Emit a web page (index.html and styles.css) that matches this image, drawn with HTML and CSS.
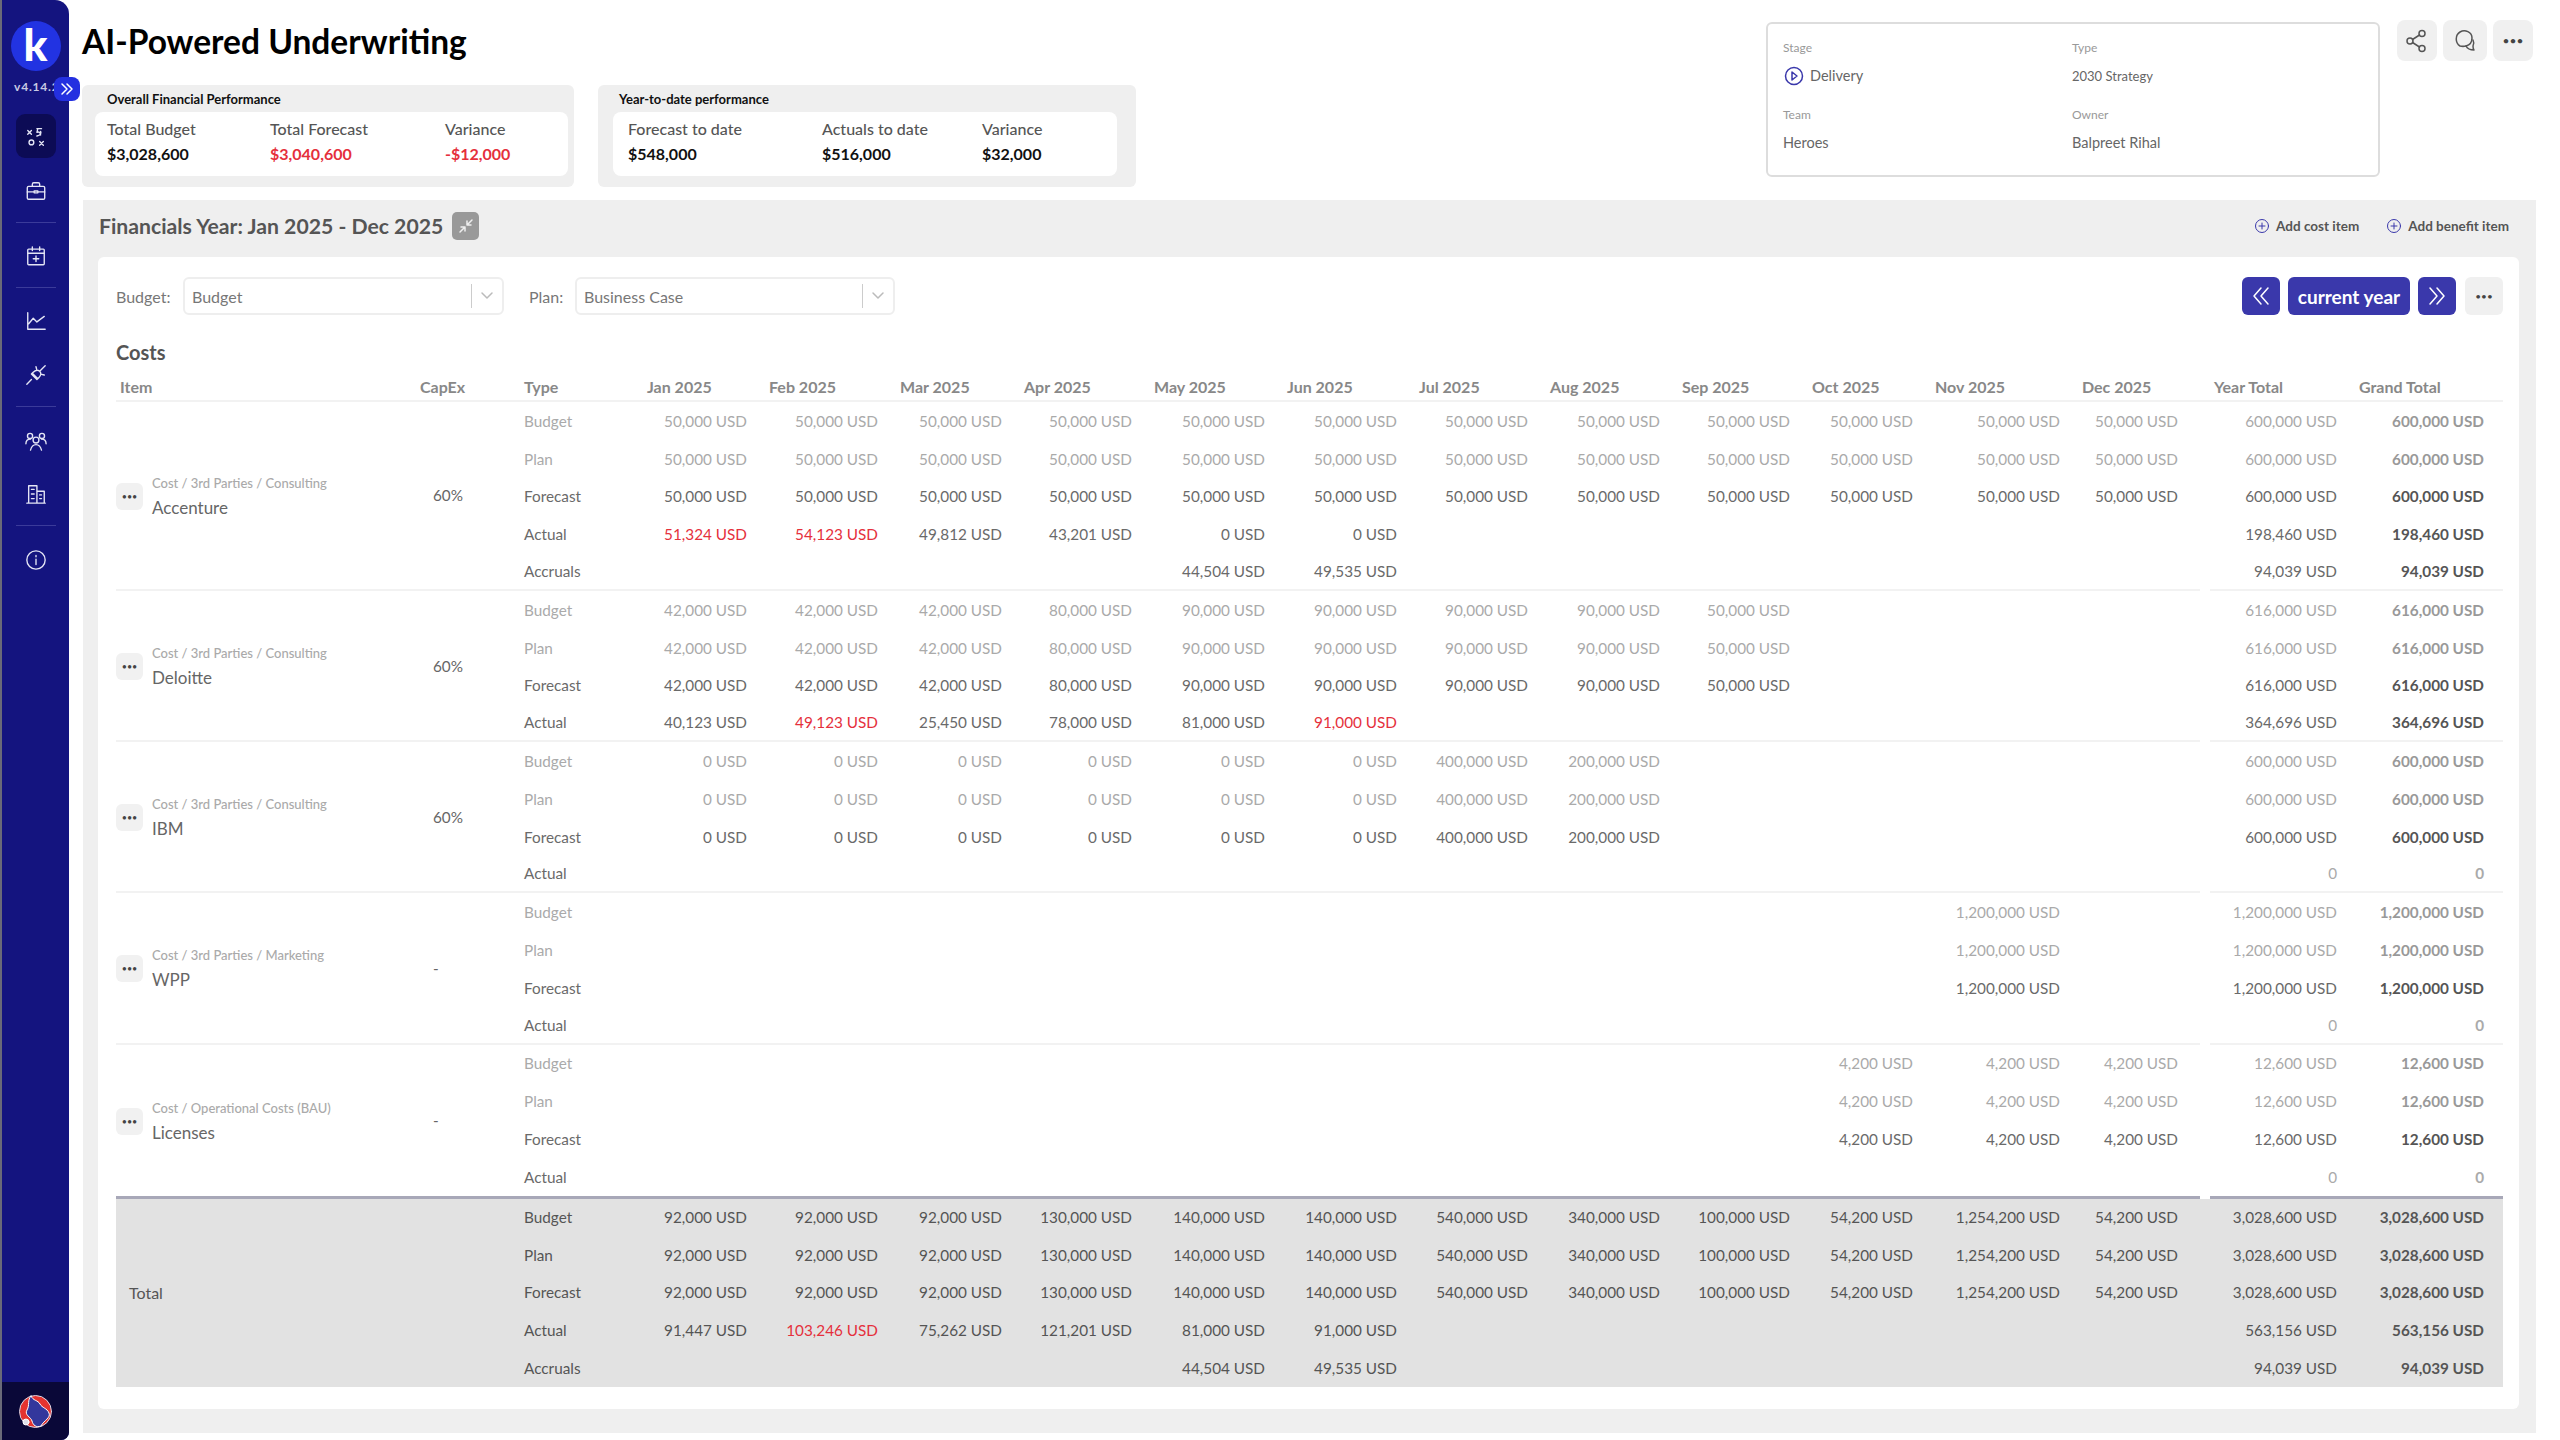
FILE: index.html
```html
<!DOCTYPE html>
<html lang="en">
<head>
  <meta charset="UTF-8">
  <title>AI-Powered Underwriting</title>
  <link rel="stylesheet" href="styles.css">
</head>
<body>
  <nav class="sidebar">
    <div class="logo">k</div>
    <div class="version">v4.14.2</div>
    <button class="expand"><svg width="14" height="14" viewBox="0 0 14 14"><path d="M2 2l5 5-5 5M7 2l5 5-5 5"/></svg></button>
    <a class="nav-item active nav-first"><svg viewBox="0 0 24 24"><path d="M3 6l4 4M7 6l-4 4M16 18l4 4M20 18l-4 4M13 12c4-1 5-3 4-5M13 4h5M14 4l-1 4c2-1 4 0 4 3"/><circle cx="7" cy="19" r="2.6"/></svg></a>
    <a class="nav-item"><svg viewBox="0 0 24 24"><rect x="2.5" y="7" width="19" height="14" rx="1.5"/><path d="M8 7V4.5A1.5 1.5 0 0 1 9.5 3h5A1.5 1.5 0 0 1 16 4.5V7M2.5 13h7M14.5 13h7M10 12h4v2h-4z"/></svg></a>
    <hr class="nav-sep">
    <a class="nav-item"><svg viewBox="0 0 24 24"><rect x="3" y="4.5" width="18" height="17" rx="1"/><path d="M3 9h18M8 2v4M16 2v4M12 12v6M9 15h6"/></svg></a>
    <hr class="nav-sep">
    <a class="nav-item"><svg viewBox="0 0 24 24"><path d="M3 3v18h19M4 15l5-6 4 4 8-6"/></svg></a>
    <a class="nav-item nav-gap"><svg viewBox="0 0 24 24"><path d="M2 22l5-5M8 10l6 6M9 9c2-2 5-3 7-1s1 5-1 7l-2 2-6-6zM16 8l6-6M12 3l1 4M17 11l4 1"/></svg></a>
    <hr class="nav-sep">
    <a class="nav-item nav-after"><svg viewBox="0 0 24 24"><circle cx="12" cy="11" r="3.2"/><path d="M6 22c1-4 3-6 6-6s5 2 6 6"/><circle cx="5.5" cy="6.5" r="2.8"/><circle cx="18.5" cy="6.5" r="2.8"/><path d="M1 15c0-3 2-5 5-5M23 15c0-3-2-5-5-5"/></svg></a>
    <a class="nav-item nav-wide"><svg viewBox="0 0 24 24"><path d="M2 22h20M4 22V3h9v19M13 9h8v13M7 7h3M7 12h3M7 17h3M16 13h2M16 17h2"/></svg></a>
    <hr class="nav-sep">
    <a class="nav-item nav-after"><svg viewBox="0 0 24 24"><circle cx="12" cy="12" r="10"/><path d="M12 11v6M12 7v1.5"/></svg></a>
    <div class="avatar-box">
      <svg width="33" height="33" viewBox="0 0 33 33" class="avatar"><circle cx="16.5" cy="16.5" r="16" fill="#e5332f" stroke="#d8d8e8"/><path d="M12 1c2 5 7 4 9 8s7 4 9 9-5 7-8 13c-5 2-8-1-9-5S5 20 8 15s0-10 4-14z" fill="#33379c"/><circle cx="7" cy="27" r="3" fill="#dfe0ea"/></svg>
    </div>
  </nav>

  <main class="main">
    <header class="top">
      <div class="top-left">
        <h1>AI-Powered Underwriting</h1>
        <div class="kpi-row">
          <section class="kpi-card kpi-overall">
            <h2>Overall Financial Performance</h2>
            <div class="kpi-inner">
              <div class="kpi"><span>Total Budget</span><strong>$3,028,600</strong></div>
              <div class="kpi"><span>Total Forecast</span><strong class="red">$3,040,600</strong></div>
              <div class="kpi"><span>Variance</span><strong class="red">-$12,000</strong></div>
            </div>
          </section>
          <section class="kpi-card kpi-ytd">
            <h2>Year-to-date performance</h2>
            <div class="kpi-inner">
              <div class="kpi"><span>Forecast to date</span><strong>$548,000</strong></div>
              <div class="kpi"><span>Actuals to date</span><strong>$516,000</strong></div>
              <div class="kpi"><span>Variance</span><strong>$32,000</strong></div>
            </div>
          </section>
        </div>
      </div>
      <div class="info-box">
        <div class="info"><label>Stage</label><div class="stage"><svg width="20" height="20" viewBox="0 0 20 20"><circle cx="10" cy="10" r="8.5"/><path d="M8 6l5 4-5 4z"/></svg>Delivery</div></div>
        <div class="info"><label>Type</label><div class="small">2030 Strategy</div></div>
        <div class="info"><label>Team</label><div>Heroes</div></div>
        <div class="info"><label>Owner</label><div>Balpreet Rihal</div></div>
      </div>
      <div class="actions">
        <button class="icon-btn"><svg width="24" height="24" viewBox="0 0 24 24"><circle cx="5" cy="12" r="3"/><circle cx="17" cy="4.5" r="3"/><circle cx="17" cy="19.5" r="3"/><path d="M7.5 10.5L14.5 6M7.5 13.5L14.5 18"/></svg></button>
        <button class="icon-btn chat"><svg width="26" height="26" viewBox="0 0 26 26"><path d="M8 18c-5-3-5-11 0-14s12 0 12 6c0 4-2 7-6 8-2 .5-4 .5-6 0z"/><path d="M14 18c2 4 5 4 8 4-1-1-1-2-1-4 1-2 1-4 0-6"/></svg></button>
        <button class="icon-btn dots">•••</button>
      </div>
    </header>

    <section class="panel">
      <div class="panel-head">
        <h2>Financials Year: Jan 2025 - Dec 2025</h2>
        <button class="compress"><svg width="16" height="16" viewBox="0 0 16 16"><path d="M2 14l5-5M3 9h4v4M14 2L9 7M13 7H9V3"/></svg></button>
        <div class="add-links">
          <a><svg width="16" height="16" viewBox="0 0 16 16"><circle cx="8" cy="8" r="6.5"/><path d="M8 5v6M5 8h6"/></svg>Add cost item</a>
          <a><svg width="16" height="16" viewBox="0 0 16 16"><circle cx="8" cy="8" r="6.5"/><path d="M8 5v6M5 8h6"/></svg>Add benefit item</a>
        </div>
      </div>

      <div class="card">
        <div class="toolbar">
          <label>Budget:</label>
          <div class="select select-budget"><span>Budget</span><i></i><svg width="14" height="10" viewBox="0 0 14 10"><path d="M2 2l5 5 5-5"/></svg></div>
          <label class="plan-label">Plan:</label>
          <div class="select select-plan"><span>Business Case</span><i></i><svg width="14" height="10" viewBox="0 0 14 10"><path d="M2 2l5 5 5-5"/></svg></div>
          <div class="year-nav">
            <button class="nav-btn"><svg width="22" height="22" viewBox="0 0 22 22"><path d="M11 3l-7 8 7 8M18 3l-7 8 7 8"/></svg></button>
            <button class="nav-btn current">current year</button>
            <button class="nav-btn"><svg width="22" height="22" viewBox="0 0 22 22"><path d="M4 3l7 8-7 8M11 3l7 8-7 8"/></svg></button>
            <button class="nav-btn more">•••</button>
          </div>
        </div>

        <h3>Costs</h3>

        <table class="costs">
          <colgroup>
            <col class="c-item"><col class="c-capex"><col class="c-type">
            <col class="c122"><col class="c131"><col class="c124"><col class="c130"><col class="c133"><col class="c132"><col class="c131"><col class="c132"><col class="c130"><col class="c123"><col class="c147"><col class="c118"><col class="c159"><col class="c144">
          </colgroup>
          <thead>
            <tr><th>Item</th><th>CapEx</th><th>Type</th><th>Jan 2025</th><th>Feb 2025</th><th>Mar 2025</th><th>Apr 2025</th><th>May 2025</th><th>Jun 2025</th><th>Jul 2025</th><th>Aug 2025</th><th>Sep 2025</th><th>Oct 2025</th><th>Nov 2025</th><th>Dec 2025</th><th class="th-year">Year Total</th><th>Grand Total</th></tr>
          </thead>
          <tbody>
            <tr class="muted"><td rowspan="5" class="item"><div class="item-wrap"><button class="row-btn">•••</button><div><small>Cost / 3rd Parties / Consulting</small><b>Accenture</b></div></div></td><td rowspan="5" class="capex">60%</td><td>Budget</td><td>50,000 USD</td><td>50,000 USD</td><td>50,000 USD</td><td>50,000 USD</td><td>50,000 USD</td><td>50,000 USD</td><td>50,000 USD</td><td>50,000 USD</td><td>50,000 USD</td><td>50,000 USD</td><td>50,000 USD</td><td>50,000 USD</td><td>600,000 USD</td><td>600,000 USD</td></tr>
            <tr class="muted"><td>Plan</td><td>50,000 USD</td><td>50,000 USD</td><td>50,000 USD</td><td>50,000 USD</td><td>50,000 USD</td><td>50,000 USD</td><td>50,000 USD</td><td>50,000 USD</td><td>50,000 USD</td><td>50,000 USD</td><td>50,000 USD</td><td>50,000 USD</td><td>600,000 USD</td><td>600,000 USD</td></tr>
            <tr><td>Forecast</td><td>50,000 USD</td><td>50,000 USD</td><td>50,000 USD</td><td>50,000 USD</td><td>50,000 USD</td><td>50,000 USD</td><td>50,000 USD</td><td>50,000 USD</td><td>50,000 USD</td><td>50,000 USD</td><td>50,000 USD</td><td>50,000 USD</td><td>600,000 USD</td><td>600,000 USD</td></tr>
            <tr><td>Actual</td><td class="red">51,324 USD</td><td class="red">54,123 USD</td><td>49,812 USD</td><td>43,201 USD</td><td>0 USD</td><td>0 USD</td><td colspan="6"></td><td>198,460 USD</td><td>198,460 USD</td></tr>
            <tr class="end"><td>Accruals</td><td colspan="4"></td><td>44,504 USD</td><td>49,535 USD</td><td colspan="6"></td><td>94,039 USD</td><td>94,039 USD</td></tr>

            <tr class="muted"><td rowspan="4" class="item"><div class="item-wrap"><button class="row-btn">•••</button><div><small>Cost / 3rd Parties / Consulting</small><b>Deloitte</b></div></div></td><td rowspan="4" class="capex">60%</td><td>Budget</td><td>42,000 USD</td><td>42,000 USD</td><td>42,000 USD</td><td>80,000 USD</td><td>90,000 USD</td><td>90,000 USD</td><td>90,000 USD</td><td>90,000 USD</td><td>50,000 USD</td><td colspan="3"></td><td>616,000 USD</td><td>616,000 USD</td></tr>
            <tr class="muted"><td>Plan</td><td>42,000 USD</td><td>42,000 USD</td><td>42,000 USD</td><td>80,000 USD</td><td>90,000 USD</td><td>90,000 USD</td><td>90,000 USD</td><td>90,000 USD</td><td>50,000 USD</td><td colspan="3"></td><td>616,000 USD</td><td>616,000 USD</td></tr>
            <tr><td>Forecast</td><td>42,000 USD</td><td>42,000 USD</td><td>42,000 USD</td><td>80,000 USD</td><td>90,000 USD</td><td>90,000 USD</td><td>90,000 USD</td><td>90,000 USD</td><td>50,000 USD</td><td colspan="3"></td><td>616,000 USD</td><td>616,000 USD</td></tr>
            <tr class="end"><td>Actual</td><td>40,123 USD</td><td class="red">49,123 USD</td><td>25,450 USD</td><td>78,000 USD</td><td>81,000 USD</td><td class="red">91,000 USD</td><td colspan="6"></td><td>364,696 USD</td><td>364,696 USD</td></tr>

            <tr class="muted"><td rowspan="4" class="item"><div class="item-wrap"><button class="row-btn">•••</button><div><small>Cost / 3rd Parties / Consulting</small><b>IBM</b></div></div></td><td rowspan="4" class="capex">60%</td><td>Budget</td><td>0 USD</td><td>0 USD</td><td>0 USD</td><td>0 USD</td><td>0 USD</td><td>0 USD</td><td>400,000 USD</td><td>200,000 USD</td><td colspan="4"></td><td>600,000 USD</td><td>600,000 USD</td></tr>
            <tr class="muted"><td>Plan</td><td>0 USD</td><td>0 USD</td><td>0 USD</td><td>0 USD</td><td>0 USD</td><td>0 USD</td><td>400,000 USD</td><td>200,000 USD</td><td colspan="4"></td><td>600,000 USD</td><td>600,000 USD</td></tr>
            <tr><td>Forecast</td><td>0 USD</td><td>0 USD</td><td>0 USD</td><td>0 USD</td><td>0 USD</td><td>0 USD</td><td>400,000 USD</td><td>200,000 USD</td><td colspan="4"></td><td>600,000 USD</td><td>600,000 USD</td></tr>
            <tr class="end zero"><td>Actual</td><td colspan="12"></td><td>0</td><td>0</td></tr>

            <tr class="muted"><td rowspan="4" class="item"><div class="item-wrap"><button class="row-btn">•••</button><div><small>Cost / 3rd Parties / Marketing</small><b>WPP</b></div></div></td><td rowspan="4" class="capex dash">-</td><td>Budget</td><td colspan="10"></td><td>1,200,000 USD</td><td></td><td>1,200,000 USD</td><td>1,200,000 USD</td></tr>
            <tr class="muted"><td>Plan</td><td colspan="10"></td><td>1,200,000 USD</td><td></td><td>1,200,000 USD</td><td>1,200,000 USD</td></tr>
            <tr><td>Forecast</td><td colspan="10"></td><td>1,200,000 USD</td><td></td><td>1,200,000 USD</td><td>1,200,000 USD</td></tr>
            <tr class="end zero"><td>Actual</td><td colspan="12"></td><td>0</td><td>0</td></tr>

            <tr class="muted"><td rowspan="4" class="item last"><div class="item-wrap"><button class="row-btn">•••</button><div><small>Cost / Operational Costs (BAU)</small><b>Licenses</b></div></div></td><td rowspan="4" class="capex dash last">-</td><td>Budget</td><td colspan="9"></td><td>4,200 USD</td><td>4,200 USD</td><td>4,200 USD</td><td>12,600 USD</td><td>12,600 USD</td></tr>
            <tr class="muted"><td>Plan</td><td colspan="9"></td><td>4,200 USD</td><td>4,200 USD</td><td>4,200 USD</td><td>12,600 USD</td><td>12,600 USD</td></tr>
            <tr><td>Forecast</td><td colspan="9"></td><td>4,200 USD</td><td>4,200 USD</td><td>4,200 USD</td><td>12,600 USD</td><td>12,600 USD</td></tr>
            <tr class="zero"><td>Actual</td><td colspan="12"></td><td>0</td><td>0</td></tr>
          </tbody>
          <tbody class="totals">
            <tr><td rowspan="5" colspan="2" class="total-label">Total</td><td>Budget</td><td>92,000 USD</td><td>92,000 USD</td><td>92,000 USD</td><td>130,000 USD</td><td>140,000 USD</td><td>140,000 USD</td><td>540,000 USD</td><td>340,000 USD</td><td>100,000 USD</td><td>54,200 USD</td><td>1,254,200 USD</td><td>54,200 USD</td><td>3,028,600 USD</td><td>3,028,600 USD</td></tr>
            <tr><td>Plan</td><td>92,000 USD</td><td>92,000 USD</td><td>92,000 USD</td><td>130,000 USD</td><td>140,000 USD</td><td>140,000 USD</td><td>540,000 USD</td><td>340,000 USD</td><td>100,000 USD</td><td>54,200 USD</td><td>1,254,200 USD</td><td>54,200 USD</td><td>3,028,600 USD</td><td>3,028,600 USD</td></tr>
            <tr><td>Forecast</td><td>92,000 USD</td><td>92,000 USD</td><td>92,000 USD</td><td>130,000 USD</td><td>140,000 USD</td><td>140,000 USD</td><td>540,000 USD</td><td>340,000 USD</td><td>100,000 USD</td><td>54,200 USD</td><td>1,254,200 USD</td><td>54,200 USD</td><td>3,028,600 USD</td><td>3,028,600 USD</td></tr>
            <tr><td>Actual</td><td>91,447 USD</td><td class="red">103,246 USD</td><td>75,262 USD</td><td>121,201 USD</td><td>81,000 USD</td><td>91,000 USD</td><td colspan="6"></td><td>563,156 USD</td><td>563,156 USD</td></tr>
            <tr><td>Accruals</td><td colspan="4"></td><td>44,504 USD</td><td>49,535 USD</td><td colspan="6"></td><td>94,039 USD</td><td>94,039 USD</td></tr>
          </tbody>
        </table>
      </div>
    </section>
  </main>
</body>
</html>
```
FILE: styles.css
```css
* { box-sizing: border-box; margin: 0; padding: 0; }
html, body { height: 100%; }
body {
  font-family: Lato, "Open Sans", sans-serif;
  background-color: #fff;
  color: #555;
  display: flex;
  height: 1440px;
  overflow: hidden;
}
button { border: 0; font-family: inherit; }
svg { fill: none; stroke: currentColor; stroke-width: 1.5; stroke-linecap: round; stroke-linejoin: round; }

/* sidebar */
.sidebar {
  position: relative;
  flex: 0 0 69px;
  background-color: #14147f;
  border-left: 2px solid #6a6a78;
  border-radius: 0 14px 8px 0;
  display: flex;
  flex-direction: column;
  align-items: center;
  color: #fff;
}
.logo {
  width: 50px;
  height: 50px;
  margin-top: 21px;
  border-radius: 50%;
  background-color: #2233e2;
  color: #fff;
  font-size: 44px;
  font-weight: 900;
  line-height: 46px;
  text-align: center;
}
.version { margin-top: 8px; font-size: 12px; line-height: 16px; font-weight: 700; color: #c9cae4; letter-spacing: .8px; align-self: flex-start; margin-left: 12px; }
.expand {
  position: absolute;
  left: 52px;
  top: 77px;
  width: 26px;
  height: 24px;
  border-radius: 8px;
  background-color: #2430e0;
  color: #fff;
  display: flex;
  align-items: center;
  justify-content: center;
}
.nav-item {
  width: 40px;
  height: 44px;
  display: flex;
  align-items: center;
  justify-content: center;
  border-radius: 9px;
  color: #e4e5f5;
  margin-top: 11px;
}
.nav-item svg { width: 22px; height: 22px; }
.nav-item.active { background-color: #0c0b55; margin-top: 19px; }
.nav-sep { width: 40px; border: 0; border-top: 1px solid #3b3b9a; margin: 9px 0 0; }
.nav-gap { margin-top: 10px; }
.nav-after { margin-top: 12px; }
.nav-wide { margin-top: 9px; }
.avatar-box {
  margin-top: auto;
  width: 100%;
  height: 58px;
  background-color: #0a0838;
  border-radius: 0 0 8px 0;
  display: flex;
  align-items: center;
  justify-content: center;
}
.sidebar .avatar { stroke-width: 1; }

/* top header */
.main { flex: 1; min-width: 0; padding: 0 24px 0 13px; }
.top { height: 200px; display: flex; align-items: flex-start; }
.top-left { flex: 1; }
h1 { font-size: 33.5px; font-weight: 700; color: #000; line-height: 42px; margin-top: 20px; }
.kpi-row { display: flex; gap: 24px; margin-top: 23px; }
.kpi-card { height: 102px; background-color: #efefef; border-radius: 6px; }
.kpi-card h2 { font-size: 13px; font-weight: 700; color: #111; line-height: 16px; margin: 6px 0 5px; }
.kpi-overall { width: 492px; padding: 0 6px 0 13px; }
.kpi-overall h2 { padding-left: 12px; }
.kpi-ytd { width: 538px; padding: 0 19px 0 15px; }
.kpi-ytd h2 { padding-left: 6px; }
.kpi-inner { height: 64px; background-color: #fff; border-radius: 8px; display: flex; padding: 7px 12px; }
.kpi { display: flex; flex-direction: column; gap: 5px; font-size: 16px; line-height: 20px; color: #555; font-weight: 500; }
.kpi strong { color: #111; font-weight: 700; }
.kpi-overall .kpi:nth-child(1) { width: 163px; }
.kpi-overall .kpi:nth-child(2) { width: 175px; }
.kpi-ytd .kpi-inner { padding-left: 15px; }
.kpi-ytd .kpi:nth-child(1) { width: 194px; }
.kpi-ytd .kpi:nth-child(2) { width: 160px; }
.red, .costs td.red, .totals td.red { color: #e5303c; }
.kpi strong.red { color: #e5303c; }

.info-box {
  width: 614px;
  height: 155px;
  margin-top: 22px;
  border: 2px solid #ddd;
  border-radius: 6px;
  padding: 16px 15px 0;
  display: grid;
  grid-template-columns: 289px 1fr;
  grid-auto-rows: 67px;
}
.info label { display: block; font-size: 12px; line-height: 16px; color: #999; }
.info div { margin-top: 10px; font-size: 14.5px; line-height: 20px; color: #666; display: flex; align-items: center; gap: 6px; }
.info div.small { font-size: 13px; }
.stage svg { color: #3a38ab; margin-left: 1px; }
.actions { display: flex; gap: 6px; margin: 20px 3px 0 17px; }
.icon-btn { width: 40px; height: 41px; background-color: #f0f0f0; border-radius: 8px; color: #555; display: flex; align-items: center; justify-content: center; }
.icon-btn.chat { width: 44px; }
.dots { font-size: 12px; letter-spacing: 0; color: #444; }

/* financials panel */
.panel { margin-left: 1px; height: 1233px; background-color: #efefef; padding: 0 17px 0 15px; }
.panel-head { height: 57px; display: flex; align-items: center; padding-bottom: 5px; }
.panel-head h2 { font-size: 21.2px; font-weight: 700; color: #555; line-height: 26px; margin-left: 1px; }
.compress { width: 27px; height: 28px; margin-left: 9px; border-radius: 5px; background-color: #999; color: #eee; display: flex; align-items: center; justify-content: center; }
.add-links { margin-left: auto; display: flex; gap: 27px; margin-right: 10px; }
.add-links a { display: flex; align-items: center; gap: 6px; font-size: 13.5px; font-weight: 700; color: #555; }
.add-links svg { color: #3a38ab; stroke-width: 1; }

.card { height: 1152px; background-color: #fff; border-radius: 6px; padding: 20px 18px 0 18px; }
.toolbar { display: flex; align-items: center; height: 38px; }
.toolbar label { font-size: 16px; color: #777; width: 67px; }
.toolbar .plan-label { width: 46px; margin-left: 25px; }
.select { height: 38px; border: 2px solid #eee; border-radius: 6px; background-color: #fff; display: flex; align-items: center; padding-left: 7px; color: #777; font-size: 16px; }
.select span { flex: 1; }
.select i { width: 1px; height: 24px; background-color: #ccc; }
.select svg { width: 30px; color: #bbb; stroke-width: 1.5; }
.select-budget { width: 321px; }
.select-plan { width: 320px; }
.year-nav { margin-left: auto; display: flex; gap: 9px; margin-right: -2px; }
.nav-btn { width: 38px; height: 38px; border-radius: 6px; background-color: #3a38ab; color: #fff; display: flex; align-items: center; justify-content: center; }
.nav-btn.current { width: 122px; font-size: 19px; font-weight: 700; margin: 0 -1px; }
.nav-btn.more { background-color: #f0f0f0; color: #444; font-size: 10px; }

h3 { font-size: 20px; font-weight: 700; color: #555; line-height: 24px; margin-top: 25px; }

/* costs table */
.costs { width: 2387px; table-layout: fixed; border-collapse: separate; border-spacing: 0; margin-top: 8px; font-size: 15.3px; }
.c-item { width: 304px; } .c-capex { width: 104px; } .c-type { width: 123px; }
.c118 { width: 118px; } .c122 { width: 122px; } .c123 { width: 123px; } .c124 { width: 124px; }
.c130 { width: 130px; } .c131 { width: 131px; } .c132 { width: 132px; } .c133 { width: 133px; }
.c144 { width: 144px; } .c147 { width: 147px; } .c159 { width: 159px; }
.costs th { height: 30px; text-align: left; font-size: 16px; font-weight: 700; color: #888; border-bottom: 2px solid #f2f2f2; vertical-align: top; padding-top: 5px; }
.costs th:first-child { padding-left: 4px; }
.costs .th-year { padding-left: 14px; }
.costs td { height: 37.8px; text-align: right; padding-right: 22px; color: #6a6a6a; white-space: nowrap; }
.costs td:nth-last-child(1) { padding-right: 19px; font-weight: 700; color: #555; }
.costs tr.muted td { color: #aaa; }
.costs tr.muted td:nth-last-child(1) { color: #999; }
.costs tr.muted td.item, .costs tr.muted td.capex { color: #666; }
.costs tr.zero td:nth-last-child(-n+2) { color: #aaa; }
.costs td.item, .costs td.capex, .costs td.total-label { text-align: left; padding-right: 0; }
.costs tr > td.capex ~ td:nth-child(3) { text-align: left; padding-right: 0; }
.costs tbody tr:not(:has(.item)) > td:first-child { text-align: left; padding-right: 0; }
.costs .totals tr:first-child td:nth-child(2) { text-align: left; padding-right: 0; }
.costs .item { border-bottom: 2px solid #f2f2f2; padding-top: 2px; }
.costs .capex { border-bottom: 2px solid #f2f2f2; padding-left: 13px; }
.costs .capex.dash { color: #aaa; }
.costs .last { border-bottom: 0; }
.costs tr.end td { border-bottom: 2px solid #f2f2f2; }
.costs tr.end td:nth-last-child(2) {
  border-bottom: 0;
  padding-bottom: 2px;
  background: linear-gradient(#f2f2f2, #f2f2f2) right bottom / calc(100% - 10px) 2px no-repeat;
}
.item-wrap { display: flex; align-items: center; gap: 9px; }
.row-btn { width: 27px; height: 27px; border-radius: 6px; background-color: #f1f1f1; color: #444; font-size: 9px; }
.item-wrap small { display: block; font-size: 13px; color: #aaa; line-height: 16px; font-weight: 500; }
.item-wrap b { display: block; font-size: 17px; font-weight: 400; color: #666; line-height: 20px; margin-top: 7px; }

.costs .totals td { background-color: #e2e2e2; color: #555; }
.costs .totals td.red { color: #e5303c; }
.costs .totals tr:first-child td { border-top: 3px solid #a8a8b8; height: 40px; }
.costs .totals tr:first-child td:nth-last-child(2) {
  border-top: 0;
  padding-top: 3px;
  background:
    linear-gradient(#a8a8b8, #a8a8b8) right top / calc(100% - 10px) 3px no-repeat,
    linear-gradient(#fff, #fff) left top / 10px 3px no-repeat,
    #e2e2e2;
}
.costs .total-label { padding-left: 13px; vertical-align: middle; font-size: 16px; font-weight: 400; }
```
